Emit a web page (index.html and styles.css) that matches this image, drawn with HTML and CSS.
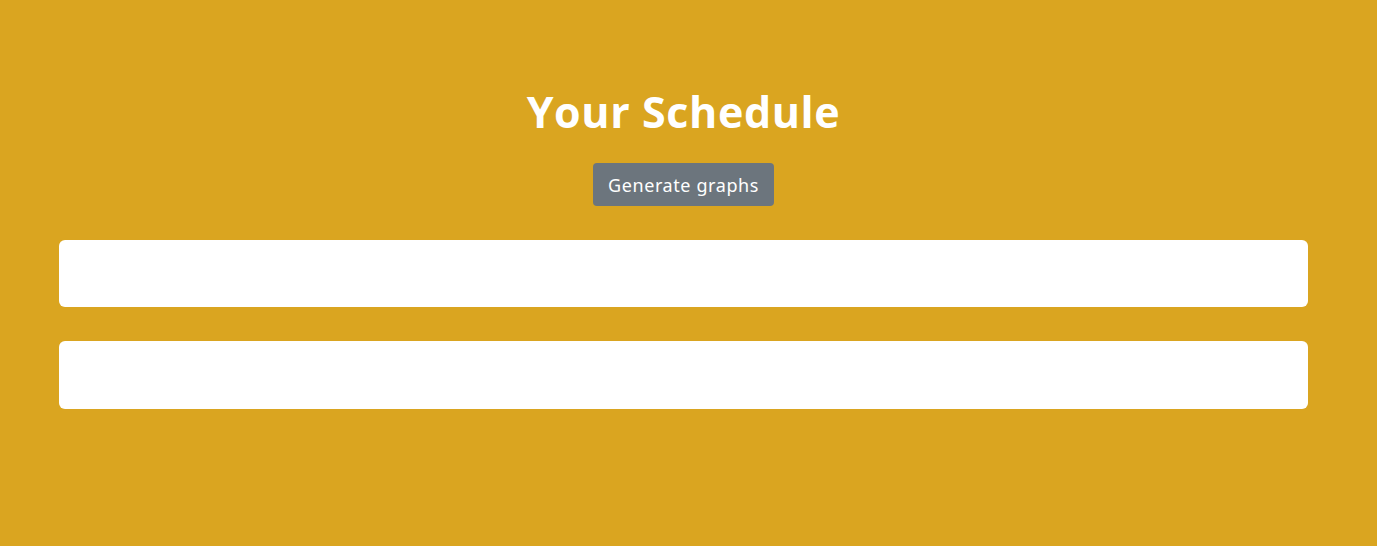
FILE: index.html
```html
<!DOCTYPE html>
<html lang="en">
<head>
<meta charset="utf-8">
<title>Your Schedule</title>
<link rel="stylesheet" href="styles.css">
</head>
<body>
<main class="page">
  <h1 class="title">Your Schedule</h1>
  <div class="actions">
    <button class="btn">Generate graphs</button>
  </div>
  <section class="cards">
    <div class="card"></div>
    <div class="card"></div>
  </section>
</main>
</body>
</html>
```
FILE: styles.css
```css
html, body {
  margin: 0;
  padding: 0;
  background: #daa520;
  height: 100%;
}
body {
  font-family: "Open Sans", "Noto Sans", sans-serif;
}
.page {
  padding: 85px 69px 0 59px;
  display: flex;
  flex-direction: column;
  align-items: stretch;
}
.title {
  margin: 0;
  text-align: center;
  color: #fff;
  font-family: "Open Sans", sans-serif;
  font-weight: 700;
  font-size: 43px;
  line-height: 54px;
  letter-spacing: 0.6px;
}
.actions {
  display: flex;
  justify-content: center;
  margin-top: 24px;
}
.btn {
  background: #6c757d;
  color: #fff;
  border: none;
  border-radius: 4px;
  height: 43px;
  padding: 0 15px;
  font-family: "Noto Sans", sans-serif;
  font-size: 18px;
  letter-spacing: 0.6px;
  cursor: pointer;
}
.cards {
  margin-top: 34px;
  display: flex;
  flex-direction: column;
  gap: 34px;
}
.card {
  background: #fff;
  border-radius: 6px;
  height: 67px;
}
.card + .card {
  height: 68px;
}
```
